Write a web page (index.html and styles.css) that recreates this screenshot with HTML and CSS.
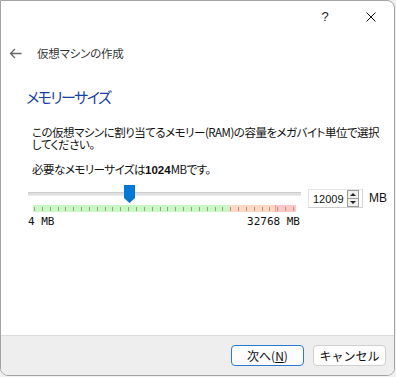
FILE: index.html
```html
<!DOCTYPE html>
<html lang="ja">
<head>
  <meta charset="UTF-8" />
  <title>仮想マシンの作成</title>
  <link rel="stylesheet" href="styles.css">
</head>
<body>
  <div class="window">
    <!-- caption buttons -->
    <div class="titlebar">
      <span class="cap-btn help">?</span>
      <span class="cap-btn">
        <svg width="10" height="10" viewBox="0 0 10 10"><path d="M0.5 0.5L9.5 9.5M9.5 0.5L0.5 9.5" stroke="#111" stroke-width="1" fill="none"/></svg>
      </span>
    </div>

    <div class="nav">
      <svg class="back" width="13" height="11" viewBox="0 0 13 11"><path d="M12.5 5.5H1.5M6 1L1.5 5.5L6 10" stroke="#666" stroke-width="1.3" fill="none"/></svg>
      <span class="nav-title">仮想マシンの作成</span>
    </div>

    <div class="page">
      <h1>メモリーサイズ</h1>
      <p class="desc">この仮想マシンに割り当てるメモリー(RAM)の容量をメガバイト単位で選択してください。</p>
      <p class="req">必要なメモリーサイズは<b>1024</b>MBです。</p>

      <div class="memory">
        <div class="slider">
          <div class="track"></div>
          <div class="thumb"></div>
          <div class="band">
            <span class="ok"></span>
            <span class="warn"></span>
            <span class="bad"></span>
          </div>
          <div class="scale">
            <span>4 MB</span>
            <span>32768 MB</span>
          </div>
        </div>
        <div class="spin">
          <span class="spin-value">12009</span>
          <span class="spin-btns">
            <span class="up"></span>
            <span class="down"></span>
          </span>
        </div>
        <span class="unit">MB</span>
      </div>
    </div>

    <div class="footer">
      <button class="btn default">次へ(<u>N</u>)</button>
      <button class="btn">キャンセル</button>
    </div>
  </div>
</body>
</html>
```

FILE: styles.css
```css
* {
  box-sizing: border-box;
}

body {
  margin: 0;
  background: #efefef;
  font-family: 'Noto Sans CJK JP', 'Liberation Sans', sans-serif;
  font-feature-settings: "palt";
  color: #111;
}

.window {
  width: 395px;
  height: 376px;
  background: #fff;
  border: 1px solid #a3a3a3;
  border-radius: 0 8px 8px 8px;
  overflow: hidden;
  display: flex;
  flex-direction: column;
}

.titlebar {
  height: 31px;
  display: flex;
  justify-content: flex-end;
}

.cap-btn {
  width: 46px;
  display: flex;
  align-items: center;
  justify-content: center;
}

.help {
  font-size: 13px;
  color: #222;
  font-family: 'Liberation Sans', sans-serif;
}

.nav {
  height: 42px;
  display: flex;
  align-items: center;
  padding-left: 8px;
}

.back {
  margin-right: 15px;
}

.nav-title {
  font-size: 11.5px;
  letter-spacing: -0.2px;
  color: #333;
}

.page {
  flex: 1;
  padding: 13px 6px 0 25px;
}

h1 {
  margin: 0;
  font-size: 15px;
  line-height: 20px;
  font-weight: normal;
  letter-spacing: -1.5px;
  color: #1541a3;
}

.desc {
  margin: 20px 0 0 6px;
  font-size: 11.5px;
  letter-spacing: -0.5px;
  line-height: 11.5px;
}

.req {
  margin: 12px 0 0 6px;
  font-size: 11.5px;
  letter-spacing: -0.5px;
  line-height: 14px;
}

.req b {
  font-family: 'Liberation Sans', sans-serif;
  letter-spacing: 0;
}

.memory {
  margin: 8px 0 0 2px;
  display: flex;
  align-items: flex-start;
}

.slider {
  position: relative;
  flex-shrink: 0;
  width: 273px;
  padding-top: 7px;
}

.track {
  height: 4px;
  background: #e0e0e0;
  border-top: 1px solid #cdcdcd;
  border-bottom: 1px solid #ececec;
}

.thumb {
  position: absolute;
  top: 0;
  left: 96px;
  width: 11px;
  height: 18px;
  background: #0078d4;
  clip-path: polygon(0 0, 100% 0, 100% 72%, 50% 100%, 0 72%);
}

.band {
  margin: 9px 5px 0 5px;
  height: 7px;
  display: flex;
  position: relative;
}

.band::after {
  content: "";
  position: absolute;
  inset: 0;
  background: repeating-linear-gradient(to right, #a4978b 0 1px, transparent 1px 7.85px) 1px 2px / 100% 4px no-repeat;
}

.ok {
  width: 196px;
  background: #c8f8c4;
}

.warn {
  width: 47px;
  background: #ffd7c2;
  border-right: 1px solid #ff9a8a;
}

.bad {
  flex: 1;
  background: #ffc6c6;
}

.scale {
  margin-top: 3px;
  display: flex;
  justify-content: space-between;
  font-family: 'DejaVu Sans Mono', monospace;
  font-size: 11px;
  line-height: 14px;
  padding-right: 1px;
}

.spin {
  flex-shrink: 0;
  margin: 4px 0 0 7px;
  width: 55px;
  height: 19px;
  display: flex;
  align-items: center;
  justify-content: space-between;
  padding: 0 3px 0 4px;
  border: 1px solid #e4e4e4;
  border-bottom-color: #cfcfcf;
  border-right-color: #d6d6d6;
  font-family: 'Liberation Sans', sans-serif;
  font-size: 11px;
}

.spin-btns {
  width: 12px;
  height: 17px;
  display: flex;
  flex-direction: column;
  border: 1px solid #9a9a9a;
  background: #f0f0f0;
}

.spin-btns span {
  flex: 1;
  display: flex;
  align-items: center;
  justify-content: center;
}

.spin-btns .up {
  border-bottom: 1px solid #9a9a9a;
}

.spin-btns .up::before,
.spin-btns .down::before {
  content: "";
  border-left: 3px solid transparent;
  border-right: 3px solid transparent;
}

.spin-btns .up::before {
  border-bottom: 3px solid #222;
}

.spin-btns .down::before {
  border-top: 3px solid #222;
}

.unit {
  margin: 6px 0 0 6px;
  font-family: 'Liberation Sans', sans-serif;
  font-size: 12px;
  line-height: 14px;
}

.footer {
  height: 40px;
  background: #eeeeee;
  border-top: 1px solid #dcdcdc;
  display: flex;
  align-items: center;
  justify-content: flex-end;
  gap: 9px;
  padding: 0 8px;
}

.btn {
  width: 73px;
  height: 21px;
  padding: 0;
  background: #fdfdfd;
  border: 1px solid #cfcfcf;
  border-radius: 4px;
  font-family: inherit;
  font-size: 12px;
  color: #111;
}

.btn.default {
  border-color: #2a79d2;
}

.btn u {
  text-underline-offset: 1px;
}
```
